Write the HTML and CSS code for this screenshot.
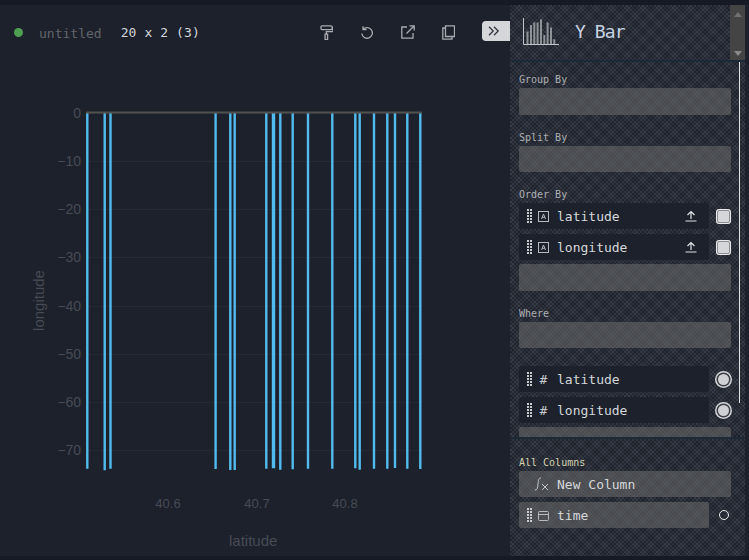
FILE: index.html
```html
<!DOCTYPE html>
<html lang="en">
<head>
<meta charset="utf-8">
<title>untitled</title>
<link rel="stylesheet" href="styles.css">
</head>
<body>
<div class="app">
  <main class="main">
    <header class="toolbar">
      <span class="status"></span>
      <span class="name">untitled</span>
      <span class="dims">20 x 2 (3)</span>
      <div class="actions">
        <svg class="tool roller" viewBox="0 0 16 18" width="13.500" height="15"><path d="M2.500 1h10.500a1.500 1.500 0 0 1 1.500 1.500v1.500a1.500 1.500 0 0 1-1.500 1.500H2.500a1.500 1.500 0 0 1-1.500-1.500V2.500a1.500 1.500 0 0 1 1.500-1.500zM14.500 3h1V8H7.500v3M6 11h3v6.500H6z"/></svg>
        <svg class="tool" viewBox="0 0 14 14" width="14" height="14"><path d="M3 1.200v3.500h3.500M3 4.500a5.300 5.300 0 1 1-1.200 4"/></svg>
        <svg class="tool" viewBox="0 0 14 14" width="14" height="14"><path d="M6 2H.8v11.200h11.200V8M5.500 8.500L13 1M8.500 .8h4.700v4.700"/></svg>
        <svg class="tool" viewBox="0 0 13 15" width="13" height="15"><path d="M3.500.8h9v10.700h-9zM3.500 3H.8v11.200h9.200v-2.700"/></svg>
      </div>
      <button class="collapse"><svg viewBox="0 0 12 10" width="12" height="10"><path d="M1 .8l4.200 4.200-4.200 4.200M6 .8l4.200 4.200-4.200 4.200"/></svg></button>
    </header>
    <svg class="chart" viewBox="0 0 510 510" width="510" height="510">
      <path class="grid" d="M86 113.500H422M86 161.500H422M86 209.500H422M86 257.500H422M86 306.500H422M86 354.500H422M86 402.500H422M86 450.500H422"/>
      <path class="bars" d="M87.300 113V468.700M104.700 113V470.300M110.500 113V468.700M215.600 113V469M230.300 113V470M234.700 113V470M266.300 113V468.700M273 113V468.300M274 113V468.300M280.300 113V469.700M292.700 113V469.300M308 113V468.700M332.300 113V468.700M355.300 113V468.300M359.700 113V469.700M374 113V468.700M387.300 113V468.700M395 113V468M407.300 113V468.700M420.300 113V469"/>
      <path class="baseline" d="M86 112.500H422"/>
      <g class="ticks">
        <text x="81" y="118">0</text>
        <text x="81" y="166">−10</text>
        <text x="81" y="214">−20</text>
        <text x="81" y="262">−30</text>
        <text x="81" y="311">−40</text>
        <text x="81" y="359">−50</text>
        <text x="81" y="407">−60</text>
        <text x="81" y="455">−70</text>
      </g>
      <g class="xticks">
        <text x="168" y="508">40.6</text>
        <text x="257" y="508">40.7</text>
        <text x="345" y="508">40.8</text>
      </g>
    </svg>
    <div class="axis-x">latitude</div>
    <div class="axis-y">longitude</div>
  </main>
  <aside class="panel">
    <div class="plugin">
      <svg class="plugin-icon" viewBox="0 0 36 28" width="36" height="28"><path class="pa" d="M.5 0V26.500H36"/><path class="pb" d="M4.500 13.600V26M8 7V26M11.300 4.600V26M14.600 4.600V26M18 1.300V26M21.300 17V26M24.600 4.600V26M28 9.600V26M31.300 21.300V26"/></svg>
      <span class="plugin-name">Y Bar</span>
      <div class="scroll-top"><span class="up"></span><span class="down"></span></div>
    </div>
    <div class="config">
      <div class="scrollbar"></div>
      <section class="block">
        <div class="label">Group By</div>
        <div class="drop"></div>
      </section>
      <section class="block">
        <div class="label">Split By</div>
        <div class="drop"></div>
      </section>
      <section class="block block-order">
        <div class="label">Order By</div>
        <div class="stack">
          <div class="row-wrap">
            <div class="col"><svg class="grip" viewBox="0 0 5 14" width="5" height="14"><path d="M0 0h2v2H0zM3 0h2v2H3zM0 3h2v2H0zM3 3h2v2H3zM0 6h2v2H0zM3 6h2v2H3zM0 9h2v2H0zM3 9h2v2H3zM0 12h2v2H0zM3 12h2v2H3z"/></svg><svg class="type" viewBox="0 0 11 11" width="11" height="11"><rect x=".5" y=".5" width="10" height="10"/><path d="M3.500 8l2-5 2 5M4.300 6.300h2.400"/></svg><span class="col-name">latitude</span><svg class="sort" viewBox="0 0 12 12" width="12" height="12"><path d="M6 9V1.500M2.500 5L6 1.500 9.500 5M.5 11h11"/></svg></div>
            <span class="check"></span>
          </div>
          <div class="row-wrap">
            <div class="col"><svg class="grip" viewBox="0 0 5 14" width="5" height="14"><path d="M0 0h2v2H0zM3 0h2v2H3zM0 3h2v2H0zM3 3h2v2H3zM0 6h2v2H0zM3 6h2v2H3zM0 9h2v2H0zM3 9h2v2H3zM0 12h2v2H0zM3 12h2v2H3z"/></svg><svg class="type" viewBox="0 0 11 11" width="11" height="11"><rect x=".5" y=".5" width="10" height="10"/><path d="M3.500 8l2-5 2 5M4.300 6.300h2.400"/></svg><span class="col-name">longitude</span><svg class="sort" viewBox="0 0 12 12" width="12" height="12"><path d="M6 9V1.500M2.500 5L6 1.500 9.500 5M.5 11h11"/></svg></div>
            <span class="check"></span>
          </div>
          <div class="drop"></div>
        </div>
      </section>
      <section class="block block-where">
        <div class="label">Where</div>
        <div class="drop"></div>
      </section>
      <section class="block">
        <div class="stack">
          <div class="row-wrap">
            <div class="col"><svg class="grip" viewBox="0 0 5 14" width="5" height="14"><path d="M0 0h2v2H0zM3 0h2v2H3zM0 3h2v2H0zM3 3h2v2H3zM0 6h2v2H0zM3 6h2v2H3zM0 9h2v2H0zM3 9h2v2H3zM0 12h2v2H0zM3 12h2v2H3z"/></svg><span class="hash">#</span><span class="col-name">latitude</span></div>
            <span class="radio"></span>
          </div>
          <div class="row-wrap">
            <div class="col"><svg class="grip" viewBox="0 0 5 14" width="5" height="14"><path d="M0 0h2v2H0zM3 0h2v2H3zM0 3h2v2H0zM3 3h2v2H3zM0 6h2v2H0zM3 6h2v2H3zM0 9h2v2H0zM3 9h2v2H3zM0 12h2v2H0zM3 12h2v2H3z"/></svg><span class="hash">#</span><span class="col-name">longitude</span></div>
            <span class="radio"></span>
          </div>
          <div class="drop"></div>
        </div>
      </section>
    </div>
    <div class="all">
      <div class="label label-all">All Columns</div>
      <div class="new-col"><svg class="fx" viewBox="0 0 15 14" width="15" height="14"><path d="M1 13c2.500 0 2.500-2 3-6s.5-6 3-6M8 7l6 6M14 7l-6 6"/></svg><span class="col-name">New Column</span></div>
      <div class="row-wrap">
        <div class="col col-off"><svg class="grip" viewBox="0 0 5 14" width="5" height="14"><path d="M0 0h2v2H0zM3 0h2v2H3zM0 3h2v2H0zM3 3h2v2H3zM0 6h2v2H0zM3 6h2v2H3zM0 9h2v2H0zM3 9h2v2H3zM0 12h2v2H0zM3 12h2v2H3z"/></svg><svg class="type" viewBox="0 0 11 11" width="11" height="11"><rect x=".5" y="1.500" width="10" height="9" rx="1"/><path d="M.5 4.500h10"/></svg><span class="col-name">time</span></div>
        <span class="radio-off"></span>
      </div>
    </div>
  </aside>
  <div class="gutter"></div>
</div>
</body>
</html>
```
FILE: styles.css
```css
* { box-sizing: border-box; }
html, body { margin: 0; height: 100%; overflow: hidden; }
body { background: #151a25; font-family: "DejaVu Sans Mono", "Liberation Mono", monospace; }
.app { display: flex; width: 749px; height: 551px; margin-top: 5px; }
.main { position: relative; width: 510px; height: 551px; background: #1c212c; flex: none; }
.toolbar { display: flex; align-items: center; height: 54px; padding-left: 14px; }
.status { width: 9px; height: 9px; border-radius: 50%; background: #4f9f52; }
.name { margin-left: 16px; font-size: 13px; color: #63656a; position: relative; top: 1px; }
.dims { margin-left: 19px; font-size: 13px; letter-spacing: .1px; color: #d4d6da; }
.actions { display: flex; align-items: center; margin-left: 120px; gap: 27px; }
.tool { fill: none; stroke: #a9abaf; stroke-width: 1.300; }
.roller { stroke-width: 1.600; }
.collapse { display: flex; align-items: center; justify-content: center; margin-left: auto; margin-top: -2px; width: 28px; height: 20px; padding: 0 4px 0 0; border: 0; border-radius: 4px 0 0 4px; background: #d5d6d9; }
.collapse svg { fill: none; stroke: #33373f; stroke-width: 1.300; }
.chart { position: absolute; left: 0; top: -5px; overflow: visible; }
.grid { stroke: #242933; stroke-width: 1; fill: none; }
.bars { stroke: #52bbee; stroke-width: 2.400; fill: none; }
.baseline { stroke: #50504e; stroke-width: 2; fill: none; }
.ticks text { font: 14px "Liberation Sans", Arial, sans-serif; fill: #474b54; text-anchor: end; }
.xticks text { font: 13px "Liberation Sans", Arial, sans-serif; fill: #474b54; text-anchor: middle; }
.axis-x { position: absolute; left: 229px; top: 527px; font: 15px "Liberation Sans", Arial, sans-serif; color: #474b54; }
.axis-y { position: absolute; left: -2px; top: 287px; width: 80px; text-align: center; transform: rotate(-90deg); font: 15px "Liberation Sans", Arial, sans-serif; color: #474b54; }

.panel {
  position: relative;
  width: 235px; height: 551px; flex: none;
  display: flex; flex-direction: column;
  background-color: #2a2f39;
  background-image:
    repeating-linear-gradient(45deg, rgba(16,20,29,.18) 0 5.500px, transparent 5.500px 11px),
    repeating-linear-gradient(-45deg, rgba(16,20,29,.18) 0 5.500px, transparent 5.500px 11px),
    repeating-conic-gradient(#252a34 0 25%, #383c46 0 50%);
  background-size: auto, auto, 4px 4px;
}
.gutter { flex: 1; background: #1c212c; }
.plugin { position: relative; display: flex; align-items: center; height: 55px; padding: 0 0 2px 13px; flex: none; }
.plugin-icon { fill: none; margin-top: 1px; }
.pa { stroke: #c1c4c9; stroke-width: 1; }
.pb { stroke: #8f9297; stroke-width: 2; }
.plugin-name { margin-left: 16px; font-size: 18px; letter-spacing: -.9px; color: #c7d3e2; }
.scroll-top { position: absolute; right: 0; top: 0; width: 15px; height: 57px; background: #444; }
.up, .down { position: absolute; left: 3.500px; width: 0; height: 0; border-left: 4px solid transparent; border-right: 4px solid transparent; }
.up { top: 7px; border-bottom: 5px solid #6f7071; }
.down { bottom: 6px; border-top: 5px solid #898a8b; }
.config { position: relative; height: 379px; padding: 11px 14px 0 9px; overflow: hidden; flex: none; border-top: 2px solid #1c2937; border-bottom: 2px solid #1c2937; }
.scrollbar { position: absolute; right: 5px; top: 0; width: 1.500px; height: 341px; background: #dfe1e4; }
.block { margin-bottom: 16px; }
.block-where { margin-bottom: 18px; }
.label { height: 15px; line-height: 14px; font-size: 10px; color: #aeb0b4; }
.drop { width: 212px; height: 26.500px; border-radius: 2px; background: rgba(108,108,108,.55); }
.stack { display: flex; flex-direction: column; width: 212px; }
.row-wrap { display: flex; align-items: center; height: 26px; width: 212px; margin-bottom: 5px; }
.row-wrap + .row-wrap { margin-bottom: 4px; }
.col { display: flex; align-items: center; width: 190px; height: 100%; padding-left: 8px; border-radius: 2px; background: #1c212c; }
.col-off { background: rgba(108,108,108,.55); }
.grip { fill: #c8cacd; flex: none; }
.type { margin-left: 6px; fill: none; stroke: #b8babd; stroke-width: 1; flex: none; }
.col-name { margin-left: 8px; font-size: 13px; color: #d6d8db; }
.block-order .col-name { padding-top: 1px; }
.hash { width: 11px; margin-left: 6px; font-size: 13px; color: #c8cacd; text-align: center; }
.sort { margin-left: auto; margin-right: 12.500px; fill: none; stroke: #e0e2e4; stroke-width: 1.200; flex: none; }
.check { width: 13px; height: 13px; margin-left: 8px; background: #d5d6d9; border: 1px solid #8b8d91; border-radius: 2px; box-shadow: 0 0 0 1px #e8e9ea; }
.radio { width: 11px; height: 11px; margin-left: 9px; border-radius: 50%; background: #cfd0d3; box-shadow: 0 0 0 1.500px #3b3e45, 0 0 0 3px #d5d6d9; }
.radio-off { width: 10px; height: 10px; margin-left: 9.500px; border-radius: 50%; border: 1.500px solid #e8e9ea; }
.all { padding: 17px 14px 0 9px; flex: 1; }
.label-all { color: #d4d2b0; }
.new-col { display: flex; align-items: center; width: 212px; height: 26px; margin-bottom: 5px; padding-left: 15px; border-radius: 2px; background: rgba(108,108,108,.55); }
.fx { fill: none; stroke: #c4c6c9; stroke-width: 1; flex: none; }
```
